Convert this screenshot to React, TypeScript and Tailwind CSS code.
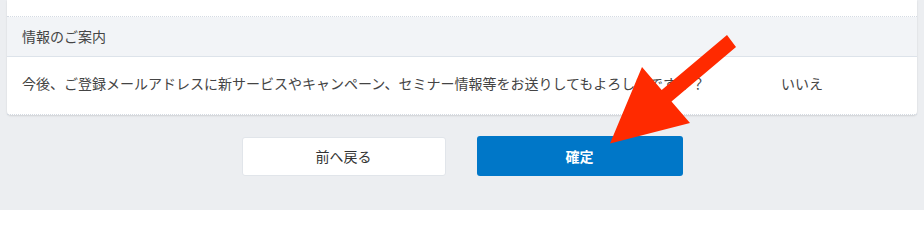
export default function App() {
  return (
    <div
      className="relative h-[210px] w-full overflow-hidden bg-[#eceef1] px-[7px] text-[#444]"
      style={{ fontFamily: '"Noto Sans CJK JP", "Noto Sans", sans-serif' }}
    >
      {/* Card */}
      <div className="rounded-b-[4px] bg-white shadow-[0_1px_2px_rgba(0,0,0,0.12)]">
        <div className="h-[17px] border-b border-dotted border-[#d5dbe3]" />
        <div className="flex h-[40px] items-center border-b border-[#dde3ea] bg-[#f2f4f7] px-[15px] text-[14px]">
          情報のご案内
        </div>
        <div className="flex h-[57px] items-center pb-[4px] text-[14px]">
          <div className="w-[774px] pl-[15px]">
            今後、ご登録メールアドレスに新サービスやキャンペーン、セミナー情報等をお送りしてもよろしいですか？
          </div>
          <div>いいえ</div>
        </div>
        <div className="border-b border-dotted border-[#d5dbe3]" />
      </div>

      {/* Buttons */}
      <div className="mt-[21px] flex items-center justify-center gap-[31px]">
        <button className="h-[39px] w-[204px] rounded-[3px] border border-[#e1e5ea] bg-white text-[14px] text-[#333]">
          前へ戻る
        </button>
        <button className="h-[40px] w-[206px] rounded-[3px] bg-[#0077c8] text-[14px] font-bold text-white">
          確定
        </button>
      </div>

      {/* Red arrow annotation */}
      <svg className="pointer-events-none absolute left-0 top-0" width="924" height="210" viewBox="0 0 924 210">
        <polygon
          points="727,35 736,47 671.5,101.4 690,123 610,143.5 642,67 661.7,90"
          fill="#ff2a00"
        />
      </svg>
    </div>
  );
}
